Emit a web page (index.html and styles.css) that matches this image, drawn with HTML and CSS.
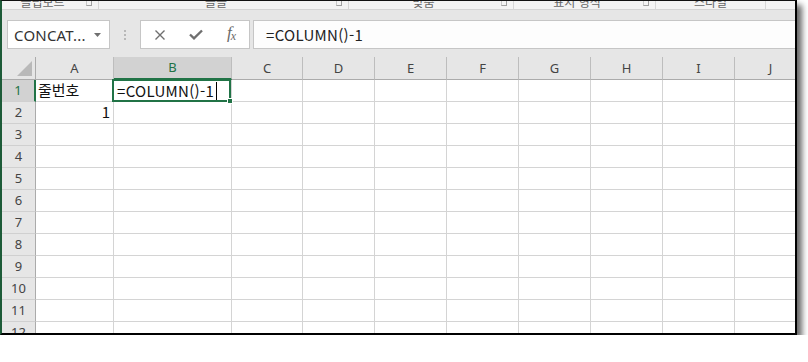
FILE: index.html
```html
<!DOCTYPE html>
<html lang="ko">
<head>
  <meta charset="UTF-8" />
  <title>Excel - 줄번호</title>
  <link rel="stylesheet" href="styles.css">
</head>
<body>
  <div class="window">
    <!-- ribbon group labels (cut off at the top) -->
    <div class="ribbon-tail">
      <div class="group g-clip"><span class="label">클립보드</span><span class="launcher"></span></div>
      <div class="group g-font"><span class="label">글꼴</span><span class="launcher"></span></div>
      <div class="group g-align"><span class="label">맞춤</span><span class="launcher"></span></div>
      <div class="group g-num"><span class="label">표시 형식</span><span class="launcher"></span></div>
      <div class="group g-style"><span class="label">스타일</span></div>
    </div>

    <!-- formula bar -->
    <div class="formula-bar">
      <div class="name-box">
        <span>CONCAT...</span>
        <svg class="dd" width="7" height="4" viewBox="0 0 7 4"><path d="M0 0H7L3.5 4Z" fill="#707070"/></svg>
      </div>
      <div class="grip"><i></i><i></i><i></i></div>
      <div class="fx-buttons">
        <svg width="12" height="12" viewBox="0 0 12 12"><path d="M1.5 1.5L10.5 10.5M10.5 1.5L1.5 10.5" stroke="#6f6f6f" stroke-width="1.4" fill="none"/></svg>
        <svg width="14" height="11" viewBox="0 0 14 11"><path d="M1 5.5L5 9.3L13 1.5" stroke="#6f6f6f" stroke-width="2.4" fill="none"/></svg>
        <span class="fx">f<sub>x</sub></span>
      </div>
      <div class="formula-input">=COLUMN()-1</div>
    </div>

    <!-- sheet -->
    <div class="sheet">
      <div class="row head">
        <div class="rh corner"><span class="tri"></span></div>
        <div class="cell ca">A</div><div class="cell cb active">B</div><div class="cell cc">C</div><div class="cell">D</div><div class="cell">E</div><div class="cell">F</div><div class="cell">G</div><div class="cell">H</div><div class="cell">I</div><div class="cell">J</div>
      </div>
      <div class="row">
        <div class="rh active">1</div>
        <div class="cell ca txt">줄번호</div>
        <div class="cell cb txt editing">=COLUMN()-1<span class="caret"></span><span class="sel"><span class="handle"></span></span></div>
        <div class="cell cc"></div><div class="cell"></div><div class="cell"></div><div class="cell"></div><div class="cell"></div><div class="cell"></div><div class="cell"></div><div class="cell"></div>
      </div>
      <div class="row">
        <div class="rh">2</div>
        <div class="cell ca txt num">1</div>
        <div class="cell cb"></div><div class="cell cc"></div><div class="cell"></div><div class="cell"></div><div class="cell"></div><div class="cell"></div><div class="cell"></div><div class="cell"></div><div class="cell"></div>
      </div>
      <div class="row"><div class="rh">3</div><div class="cell ca"></div><div class="cell cb"></div><div class="cell cc"></div><div class="cell"></div><div class="cell"></div><div class="cell"></div><div class="cell"></div><div class="cell"></div><div class="cell"></div><div class="cell"></div></div>
      <div class="row"><div class="rh">4</div><div class="cell ca"></div><div class="cell cb"></div><div class="cell cc"></div><div class="cell"></div><div class="cell"></div><div class="cell"></div><div class="cell"></div><div class="cell"></div><div class="cell"></div><div class="cell"></div></div>
      <div class="row"><div class="rh">5</div><div class="cell ca"></div><div class="cell cb"></div><div class="cell cc"></div><div class="cell"></div><div class="cell"></div><div class="cell"></div><div class="cell"></div><div class="cell"></div><div class="cell"></div><div class="cell"></div></div>
      <div class="row"><div class="rh">6</div><div class="cell ca"></div><div class="cell cb"></div><div class="cell cc"></div><div class="cell"></div><div class="cell"></div><div class="cell"></div><div class="cell"></div><div class="cell"></div><div class="cell"></div><div class="cell"></div></div>
      <div class="row"><div class="rh">7</div><div class="cell ca"></div><div class="cell cb"></div><div class="cell cc"></div><div class="cell"></div><div class="cell"></div><div class="cell"></div><div class="cell"></div><div class="cell"></div><div class="cell"></div><div class="cell"></div></div>
      <div class="row"><div class="rh">8</div><div class="cell ca"></div><div class="cell cb"></div><div class="cell cc"></div><div class="cell"></div><div class="cell"></div><div class="cell"></div><div class="cell"></div><div class="cell"></div><div class="cell"></div><div class="cell"></div></div>
      <div class="row"><div class="rh">9</div><div class="cell ca"></div><div class="cell cb"></div><div class="cell cc"></div><div class="cell"></div><div class="cell"></div><div class="cell"></div><div class="cell"></div><div class="cell"></div><div class="cell"></div><div class="cell"></div></div>
      <div class="row"><div class="rh">10</div><div class="cell ca"></div><div class="cell cb"></div><div class="cell cc"></div><div class="cell"></div><div class="cell"></div><div class="cell"></div><div class="cell"></div><div class="cell"></div><div class="cell"></div><div class="cell"></div></div>
      <div class="row"><div class="rh">11</div><div class="cell ca"></div><div class="cell cb"></div><div class="cell cc"></div><div class="cell"></div><div class="cell"></div><div class="cell"></div><div class="cell"></div><div class="cell"></div><div class="cell"></div><div class="cell"></div></div>
      <div class="row"><div class="rh">12</div><div class="cell ca"></div><div class="cell cb"></div><div class="cell cc"></div><div class="cell"></div><div class="cell"></div><div class="cell"></div><div class="cell"></div><div class="cell"></div><div class="cell"></div><div class="cell"></div></div>
    </div>
  </div>
</body>
</html>
```
FILE: styles.css
```css
* { box-sizing: border-box; }

body {
  margin: 0;
  background: #fff;
  font-family: "Noto Sans", "Noto Sans CJK KR", sans-serif;
}

.window {
  width: 797px;
  height: 335px;
  border-top: 1px solid #111;
  border-left: 2px solid #1d5b38;
  border-right: 2px solid #000;
  border-bottom: 2px solid #000;
  box-shadow: 5px 5px 6px rgba(0, 0, 0, 0.6);
  background: #e6e6e6;
  overflow: hidden;
  display: flex;
  flex-direction: column;
}

/* ribbon bottom edge */
.ribbon-tail {
  height: 9px;
  flex: none;
  display: flex;
  align-items: flex-end;
  background: #f3f3f3;
  border-bottom: 1px solid #d4d4d4;
  overflow: hidden;
}
.group {
  display: flex;
  align-items: flex-end;
  height: 100%;
  border-right: 1px solid #d6d6d6;
}
.group .label {
  flex: 1;
  text-align: center;
  font-family: "Noto Sans CJK KR", sans-serif;
  font-size: 12px;
  line-height: 12px;
  padding-bottom: 1px;
  color: #666;
  white-space: nowrap;
}
.launcher {
  width: 6px;
  height: 5px;
  margin: 0 6px 3px 3px;
  border-right: 1px solid #a0a0a0;
  border-bottom: 1px solid #a0a0a0;
  border-left: 1px solid #c8c8c8;
  align-self: flex-end;
}
.g-clip { width: 97px; }
.g-font { width: 250px; }
.g-align { width: 165px; }
.g-num { width: 142px; }
.g-style { width: 110px; }

/* formula bar */
.formula-bar {
  flex: none;
  display: flex;
  align-items: stretch;
  height: 47px;
  padding: 10px 0 8px 5px;
}
.name-box {
  width: 103px;
  background: #fff;
  border: 1px solid #c6c6c6;
  display: flex;
  align-items: center;
  padding: 0 8px 0 6px;
  font-size: 15px;
  color: #333;
}
.name-box span { flex: 1; letter-spacing: 0.2px; }
.name-box .dd { margin-top: 1px; }

.grip {
  width: 30px;
  display: flex;
  flex-direction: column;
  align-items: center;
  justify-content: center;
  gap: 2px;
}
.grip i {
  width: 2px;
  height: 2px;
  background: #b8b8b8;
}

.fx-buttons {
  width: 110px;
  background: #fff;
  border: 1px solid #c6c6c6;
  display: flex;
  align-items: center;
  justify-content: space-between;
  padding: 0 13px 0 13px;
}
.fx {
  font-family: "Liberation Serif", serif;
  font-style: italic;
  font-size: 17px;
  color: #6a6a6a;
  line-height: 1;
  margin-top: -3px;
}
.fx sub { font-size: 12px; vertical-align: -2px; margin-left: -1px; }

.formula-input {
  flex: 1;
  margin-left: 3px;
  margin-right: -1px;
  background: #fdfdfd;
  border: 1px solid #c6c6c6;
  display: flex;
  align-items: center;
  padding-left: 12px;
  font-family: "Noto Sans CJK KR", sans-serif;
  font-size: 15px;
  letter-spacing: 0.3px;
  color: #222;
}

/* sheet grid */
.sheet {
  flex: 1;
  background: #fff;
  overflow: hidden;
}
.row {
  display: flex;
  height: 22px;
}
.row.head {
  height: 23px;
  background: #e6e6e6;
}
.cell, .rh {
  flex: none;
  width: 72px;
  border-right: 1px solid #d4d4d4;
  border-bottom: 1px solid #d4d4d4;
}
.cell.ca { width: 78px; }
.cell.cb { width: 118px; }
.cell.cc { width: 71px; }

.head .cell {
  border-right-color: #bdbdbd;
  border-bottom-color: #ababab;
  text-align: center;
  font-size: 13px;
  line-height: 22px;
  color: #444;
}
.head .cell.active {
  background: #d2d2d2;
  color: #217346;
  border-bottom: 2px solid #217346;
  line-height: 21px;
}

.rh {
  width: 34px;
  background: #e6e6e6;
  border-right-color: #ababab;
  border-bottom-color: #d0d0d0;
  text-align: center;
  font-size: 13px;
  line-height: 21px;
  color: #444;
}
.rh.active {
  background: #d2d2d2;
  color: #217346;
  border-right: 2px solid #217346;
}
.rh.corner {
  border-bottom-color: #ababab;
  display: flex;
  align-items: flex-end;
  justify-content: flex-end;
  padding: 0 3px 3px 0;
}
.tri {
  width: 0;
  height: 0;
  border-left: 15px solid transparent;
  border-bottom: 15px solid #b9b9b9;
}

.txt {
  font-family: "Noto Sans CJK KR", sans-serif;
  font-size: 15px;
  line-height: 20px;
  color: #111;
  padding-left: 2px;
  white-space: nowrap;
}
.txt.num {
  text-align: right;
  padding-right: 3px;
}

.editing {
  position: relative;
  padding-left: 3px;
  display: flex;
  align-items: center;
  letter-spacing: 0.3px;
}
.caret {
  display: inline-block;
  width: 1px;
  height: 18px;
  margin-left: 2px;
  background: #000;
}
.sel {
  position: absolute;
  left: -2px;
  top: -1px;
  right: 0;
  bottom: -1px;
  border: 2px solid #217346;
}
.handle {
  position: absolute;
  right: -4px;
  bottom: -4px;
  width: 6px;
  height: 6px;
  background: #217346;
  border: 1px solid #fff;
}
```
